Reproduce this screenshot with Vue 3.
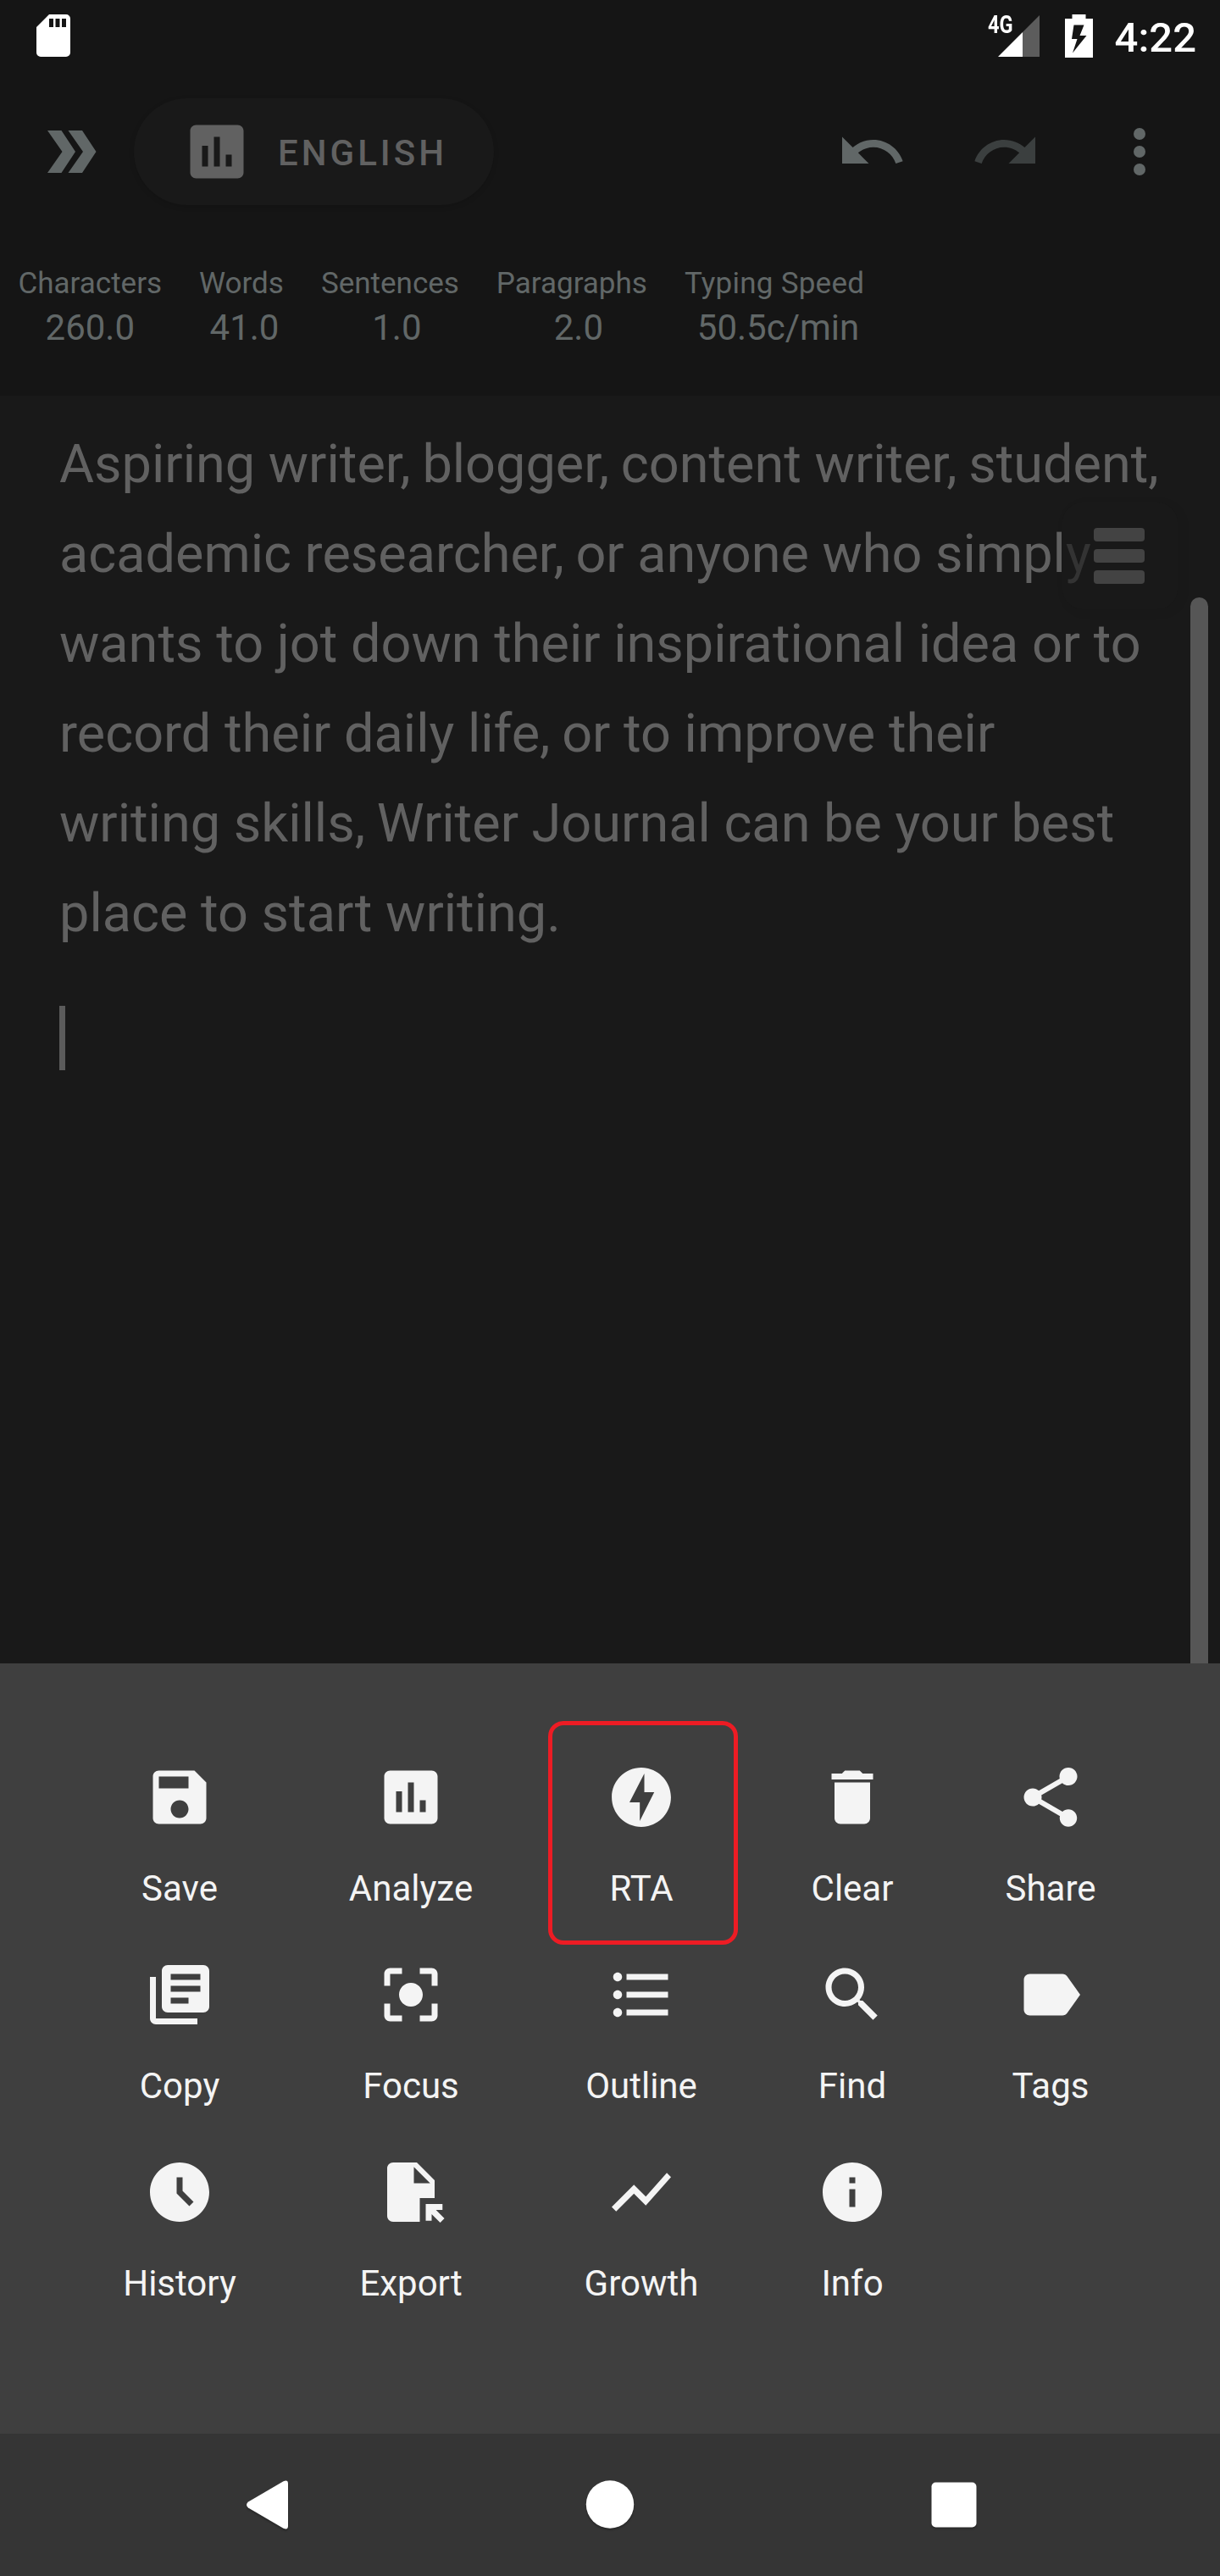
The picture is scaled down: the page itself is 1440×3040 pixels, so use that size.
<script setup>
const stats = [
  { label: 'Characters', value: '260.0', shift: 0 },
  { label: 'Words', value: '41.0', shift: 7 },
  { label: 'Sentences', value: '1.0', shift: 16 },
  { label: 'Paragraphs', value: '2.0', shift: 16 },
  { label: 'Typing Speed', value: '50.5c/min', shift: 9, wide: true },
]

const lines = [
  'Aspiring writer, blogger, content writer, student,',
  'academic researcher, or anyone who simply',
  'wants to jot down their inspirational idea or to',
  'record their daily life, or to improve their',
  'writing skills, Writer Journal can be your best',
  'place to start writing.',
].map((l) => l.split(/(?<=,)( )/))

const chart =
  'M19 3H5c-1.1 0-2 .9-2 2v14c0 1.1.9 2 2 2h14c1.1 0 2-.9 2-2V5c0-1.1-.9-2-2-2zM9 17H7v-7h2v7zm4 0h-2V7h2v10zm4 0h-2v-4h2v4z'

const actions = [
  { label: 'Save', d: 'M17 3H5c-1.11 0-2 .9-2 2v14c0 1.1.89 2 2 2h14c1.1 0 2-.9 2-2V7l-4-4zm-5 16c-1.66 0-3-1.34-3-3s1.34-3 3-3 3 1.34 3 3-1.34 3-3 3zm3-10H5V5h10v4z' },
  { label: 'Analyze', d: chart },
  { label: 'RTA', active: true, d: 'M12 2.02c-5.51 0-9.98 4.47-9.98 9.98s4.47 9.98 9.98 9.98 9.98-4.47 9.98-9.98S17.51 2.02 12 2.02zM11.48 20v-6.26H8L13 4v6.26h3.35L11.48 20z' },
  { label: 'Clear', d: 'M6 19c0 1.1.9 2 2 2h8c1.1 0 2-.9 2-2V7H6v12zM19 4h-3.5l-1-1h-5l-1 1H5v2h14V4z' },
  { label: 'Share', d: 'M18 16.08c-.76 0-1.44.3-1.96.77L8.91 12.7c.05-.23.09-.46.09-.7s-.04-.47-.09-.7l7.05-4.11c.54.5 1.25.81 2.04.81 1.66 0 3-1.34 3-3s-1.34-3-3-3-3 1.34-3 3c0 .24.04.47.09.7L8.04 9.81C7.5 9.31 6.79 9 6 9c-1.66 0-3 1.34-3 3s1.34 3 3 3c.79 0 1.5-.31 2.04-.81l7.12 4.15c-.05.21-.08.43-.08.66 0 1.61 1.31 2.92 2.92 2.92s2.92-1.31 2.92-2.92-1.31-2.92-2.92-2.92z' },
  { label: 'Copy', d: 'M4 6H2v14c0 1.1.9 2 2 2h14v-2H4V6zm16-4H8c-1.1 0-2 .9-2 2v12c0 1.1.9 2 2 2h12c1.1 0 2-.9 2-2V4c0-1.1-.9-2-2-2zm-1 9H9V9h10v2zm-4 4H9v-2h6v2zm4-8H9V5h10v2z' },
  { label: 'Focus', d: 'M12 8c-2.21 0-4 1.79-4 4s1.79 4 4 4 4-1.79 4-4-1.79-4-4-4zm-7 7H3v4c0 1.1.9 2 2 2h4v-2H5v-4zM5 5h4V3H5c-1.1 0-2 .9-2 2v4h2V5zm14-2h-4v2h4v4h2V5c0-1.1-.9-2-2-2zm0 16h-4v2h4c1.1 0 2-.9 2-2v-4h-2v4z' },
  { label: 'Outline', d: 'M4 10.5c-.83 0-1.5.67-1.5 1.5s.67 1.5 1.5 1.5 1.5-.67 1.5-1.5-.67-1.5-1.5-1.5zm0-6c-.83 0-1.5.67-1.5 1.5S3.17 7.5 4 7.5 5.5 6.83 5.5 6 4.83 4.5 4 4.5zm0 12c-.83 0-1.5.68-1.5 1.5s.68 1.5 1.5 1.5 1.5-.68 1.5-1.5-.67-1.5-1.5-1.5zM7 19h14v-2H7v2zm0-6h14v-2H7v2zm0-8v2h14V5H7z' },
  { label: 'Find', d: 'M15.5 14h-.79l-.28-.27C15.41 12.59 16 11.11 16 9.5 16 5.91 13.09 3 9.5 3S3 5.91 3 9.5 5.91 16 9.5 16c1.61 0 3.09-.59 4.23-1.57l.27.28v.79l5 4.99L20.49 19l-4.99-5zm-6 0C7.01 14 5 11.99 5 9.5S7.01 5 9.5 5 14 7.01 14 9.5 11.99 14 9.5 14z' },
  { label: 'Tags', d: 'M17.63 5.84C17.27 5.33 16.67 5 16 5L5 5.01C3.9 5.01 3 5.9 3 7v10c0 1.1.9 1.99 2 1.99L16 19c.67 0 1.27-.33 1.63-.84L22 12l-4.37-6.16z' },
  { label: 'History', d: 'M12 2C6.48 2 2 6.48 2 12s4.48 10 10 10 10-4.48 10-10S17.52 2 12 2zM11 7h2v4.59l3.71 3.7-1.42 1.42L11 12.41z' },
  { label: 'Export', d: 'M6 2h8l6 6v6h-5v8H6c-1.1 0-2-.9-2-2V4c0-1.1.9-2 2-2zm7 1.5V9h5.5zM17 16h5.65v2h-2.2l2.85 2.87-1.42 1.42L19 19.41v2.24h-2z' },
  { label: 'Growth', d: 'M3.5 18.49l6-6.01 4 4L22 6.92l-1.41-1.41-7.09 7.97-4-4L2 16.99z' },
  { label: 'Info', d: 'M12 2C6.48 2 2 6.48 2 12s4.48 10 10 10 10-4.48 10-10S17.52 2 12 2zm1 15h-2v-6h2v6zm0-8h-2V7h2v2z' },
]
</script>

<template>
  <div class="screen">
    <header class="header">
      <div class="status">
        <svg class="sd" width="40" height="50" viewBox="0 0 40 50">
          <path fill="#fff" fill-rule="evenodd" d="M15 0h20a5 5 0 0 1 5 5v40a5 5 0 0 1-5 5H5a5 5 0 0 1-5-5V15zM15 5v10h5V5zM22.500 5v10h5V5zM30 5v10h5V5z" />
        </svg>
        <div class="status-right">
          <span class="net">4G</span>
          <svg class="signal" width="49" height="49" viewBox="0 0 49 49">
            <path fill="#5c5c5c" d="M49 0v49H29V20z" />
            <path fill="#fff" d="M29 20v29H0z" />
          </svg>
          <svg class="battery" width="33" height="51" viewBox="0 0 33 51">
            <path fill="#fff" fill-rule="evenodd" d="M8.500 0h16v5H33v46H0V5h8.500zM10.500 12.500 8 29h6.500L9 45.500 25.500 25H17.500l5-12.500z" />
          </svg>
          <span class="clock">4:22</span>
        </div>
      </div>

      <div class="toolbar">
        <svg class="chevrons" width="58" height="50" viewBox="0 0 58 50">
          <path d="M0 0h16.500L33 25 16.500 50H0l17.500-25zM24.500 0H41l16.500 25L41 50H24.500L42 25z" />
        </svg>
        <button class="pill">
          <svg class="icon" viewBox="0 0 24 24"><path :d="chart" /></svg>
          <span>ENGLISH</span>
        </button>
        <div class="tools">
          <svg class="icon" viewBox="0 0 24 24">
            <path d="M12.500 8c-2.650 0-5.050.99-6.900 2.600L2 7v9h9l-3.620-3.620c1.390-1.160 3.160-1.880 5.120-1.880 3.540 0 6.550 2.310 7.600 5.500l2.370-.78C21.080 11.030 17.150 8 12.500 8z" />
          </svg>
          <svg class="icon disabled" viewBox="0 0 24 24">
            <path d="M18.400 10.600C16.550 8.990 14.150 8 11.500 8c-4.650 0-8.580 3.030-9.960 7.220L3.900 16c1.050-3.190 4.050-5.500 7.600-5.500 1.950 0 3.730.72 5.120 1.880L13 16h9V7l-3.600 3.600z" />
          </svg>
          <svg class="icon" viewBox="0 0 24 24">
            <circle cx="12" cy="6" r="2" /><circle cx="12" cy="12" r="2" /><circle cx="12" cy="18" r="2" />
          </svg>
        </div>
      </div>

      <div class="stats">
        <div v-for="s in stats" :key="s.label" class="stat">
          <span class="stat-label" :class="{ wide: s.wide }">{{ s.label }}</span>
          <span class="stat-value" :style="{ paddingLeft: s.shift + 'px' }">{{ s.value }}</span>
        </div>
      </div>
    </header>

    <main class="editor">
      <p class="text">
        <span v-for="(l, i) in lines" :key="i" class="line"><template v-for="(t, j) in l" :key="j"><span v-if="t === ' '" class="tight">{{ t }}</span><template v-else>{{ t }}</template></template></span>
      </p>
      <div class="caret"></div>
      <div class="scrollbar"></div>
      <div class="fab"><i></i><i></i><i></i></div>
    </main>

    <section class="sheet">
      <div v-for="a in actions" :key="a.label" class="action">
        <svg class="icon" viewBox="0 0 24 24"><path fill-rule="evenodd" :d="a.d" /></svg>
        <span>{{ a.label }}</span>
        <div v-if="a.active" class="highlight"></div>
      </div>
    </section>

    <nav class="nav">
      <svg width="50" height="58" viewBox="0 0 50 58">
        <path d="M2 25.500 43.500 1.300Q49 -1 49 4v50q0 5-5.500 2.700L2 32.500q-4-3.500 0-7z" />
      </svg>
      <svg width="58" height="58" viewBox="0 0 58 58"><circle cx="29" cy="28.500" r="28.200" /></svg>
      <svg width="54" height="54" viewBox="0 0 54 54"><rect x=".5" y=".5" width="53" height="53" rx="5" /></svg>
    </nav>
  </div>
</template>

<style>
body {
  margin: 0;
  background: #191919;
}
</style>

<style scoped>
.screen {
  width: 1440px;
  height: 3040px;
  display: flex;
  flex-direction: column;
  background: #191919;
  font-family: Roboto, "Liberation Sans", sans-serif;
  overflow: hidden;
}
svg {
  display: block;
  flex: none;
}
.icon {
  width: 84px;
  height: 84px;
  fill: currentColor;
}
.header {
  height: 467px;
  flex: none;
  background: #151515;
  color: #616767;
}
.status {
  height: 84px;
  box-sizing: border-box;
  padding: 0 28px 0 43px;
  display: flex;
  justify-content: space-between;
  align-items: center;
  color: #fff;
}
.status-right {
  display: flex;
  align-items: center;
}
.net {
  align-self: flex-start;
  width: 31px;
  margin-right: -19px;
  padding-top: 2px;
  font-size: 29.500px;
  line-height: 30px;
  font-weight: 700;
  transform: scaleX(0.8);
  transform-origin: 0 0;
}
.signal {
  margin-right: 30px;
}
.battery {
  margin-right: 26px;
}
.clock {
  font-size: 49px;
  font-weight: 500;
  line-height: 57px;
  padding-top: 4px;
}
.toolbar {
  height: 190px;
  box-sizing: border-box;
  padding: 0 53px 0 56px;
  display: flex;
  align-items: center;
}
.chevrons {
  fill: currentColor;
}
.pill {
  margin: 0 0 0 44px;
  width: 425px;
  height: 126px;
  box-sizing: border-box;
  border: 0;
  border-radius: 63px;
  padding: 0 0 0 56px;
  display: flex;
  align-items: center;
  gap: 30px;
  background: #191919;
  box-shadow: 0 2px 6px rgba(0, 0, 0, 0.12);
  color: #616161;
  font: 500 42px/49px Roboto, "Liberation Sans", sans-serif;
  letter-spacing: 4px;
}
.pill span {
  padding-top: 2px;
}
.tools {
  margin-left: auto;
  display: flex;
  gap: 74px;
}
.disabled {
  color: #3b3f3f;
}
.stats {
  display: flex;
  gap: 44px;
  padding: 40px 0 0 21.500px;
}
.stat {
  display: flex;
  flex-direction: column;
  align-items: center;
}
.stat-label {
  font-size: 35px;
  line-height: 41px;
}
.wide {
  letter-spacing: 0.250px;
}
.stat-value {
  margin-top: 7px;
  font-size: 42px;
  line-height: 49px;
}
.editor {
  position: relative;
  height: 1496px;
  flex: none;
  box-sizing: border-box;
  padding: 28px 0 0 70px;
}
.text {
  margin: 0;
  font-size: 63px;
  line-height: 106px;
  color: #616161;
  white-space: pre;
  display: flex;
  flex-direction: column;
}
.line {
  display: block;
}
.tight {
  letter-spacing: -2px;
}
.caret {
  margin-top: 56px;
  width: 7px;
  height: 76px;
  background: #5b5b5b;
}
.scrollbar {
  position: absolute;
  right: 14px;
  top: 238px;
  bottom: 0;
  width: 21px;
  border-radius: 10.500px 10.500px 0 0;
  background: #565656;
}
.fab {
  position: absolute;
  left: 1254px;
  top: 126px;
  width: 136px;
  height: 126px;
  box-sizing: border-box;
  padding: 30px 0 0 37px;
  border-radius: 24px;
  background: rgba(25, 25, 25, 0.64);
  box-shadow: 4px 3px 14px rgba(0, 0, 0, 0.05);
  display: flex;
  flex-direction: column;
  gap: 9px;
}
.fab i {
  width: 60px;
  height: 16px;
  border-radius: 4px;
  background: #434343;
}
.sheet {
  height: 909px;
  flex: none;
  box-sizing: border-box;
  padding: 116px 0 0 76px;
  display: grid;
  grid-template-columns: 272px 274px 270px 228px 240px;
  grid-auto-rows: 174px;
  row-gap: 59px;
  background: #3f3f3f;
  color: #f4f4f4;
  font-size: 42px;
  line-height: 49px;
}
.action {
  position: relative;
  display: flex;
  flex-direction: column;
  align-items: center;
  gap: 41px;
}
.highlight {
  position: absolute;
  left: 25px;
  top: -48px;
  width: 224px;
  height: 264px;
  box-sizing: border-box;
  border: 5px solid #ed1c24;
  border-radius: 18px;
}
.nav {
  height: 168px;
  flex: none;
  box-sizing: border-box;
  padding: 0 287px 0 291px;
  display: flex;
  align-items: center;
  justify-content: space-between;
  background: #353535;
}
.nav svg {
  fill: #fff;
  filter: drop-shadow(0 2px 1px rgba(0, 0, 0, 0.25));
}
</style>
